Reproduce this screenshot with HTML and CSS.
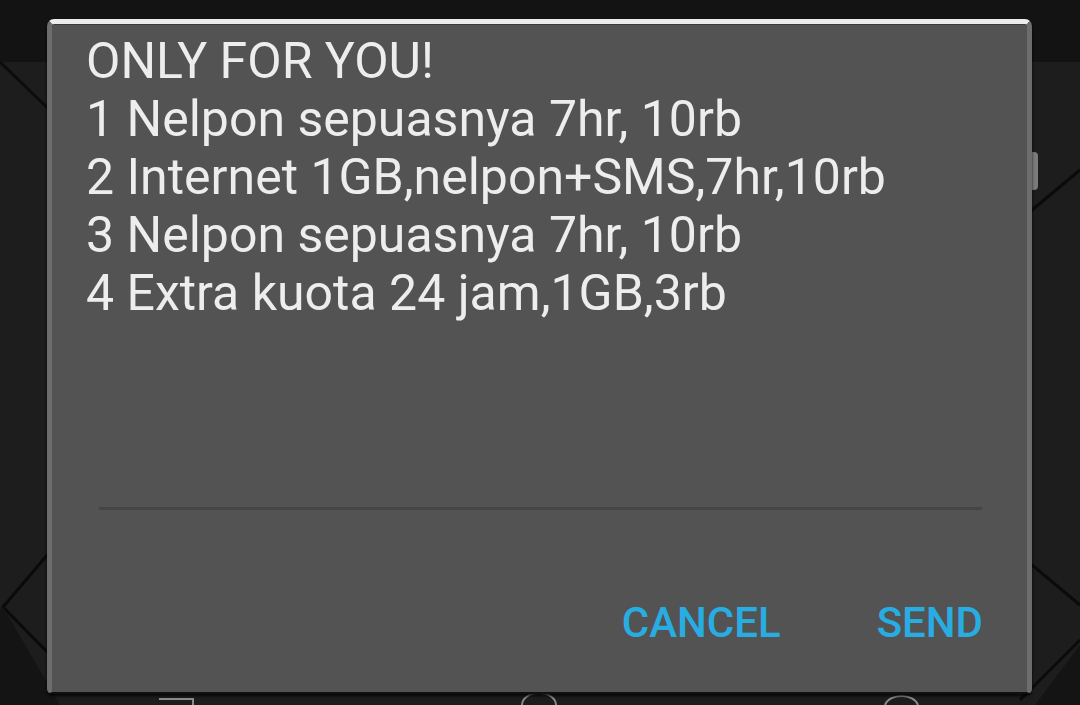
FILE: index.html
```html
<!DOCTYPE html>
<html lang="en">
<head>
    <meta charset="UTF-8">
    <meta name="viewport" content="width=device-width,initial-scale=1">
    <title>USSD</title>
    <link rel="stylesheet" href="styles.css">
</head>
<body>
    <svg class="backdrop" width="1080" height="705" viewBox="0 0 1080 705">
        <rect x="0" y="62" width="1080" height="643" fill="#1d1d1d"/>
        <rect x="0" y="0" width="1080" height="62" fill="#131313"/>
        <path d="M0 62 L60 120" stroke="#0c0c0c" stroke-width="3"/>
        <path d="M60 540 L3 607 L60 665" stroke="#0a0a0a" stroke-width="3" fill="none"/>
        <path d="M0 610 L0 705 L60 705 L3 607 Z" fill="#141414"/>
        <path d="M1020 220 L1080 170" stroke="#0b0b0b" stroke-width="3"/>
        <path d="M1020 555 L1080 605" stroke="#0b0b0b" stroke-width="3"/>
        <path d="M1020 700 L1080 640" stroke="#0b0b0b" stroke-width="3"/>
        <path d="M1035 705 L1080 705 L1080 645 Z" fill="#141414"/>
        <!-- nav keys peeking under the dialog -->
        <path d="M159 699 L193 699 L193 705" stroke="#8a8a8a" stroke-width="2" fill="none"/>
        <path d="M522 705 A17 12 0 0 1 556 705" stroke="#8a8a8a" stroke-width="2" fill="none"/>
        <path d="M885 705 A17 12 0 0 1 918 705" stroke="#8a8a8a" stroke-width="2" fill="none"/>
        <rect x="1024" y="152" width="14" height="38" rx="4" fill="#7b7b7b"/>
    </svg>

    <div class="dialog">
        <div class="message">
            <p>ONLY FOR YOU!</p>
            <p>1 Nelpon sepuasnya 7hr, 10rb</p>
            <p>2 Internet 1GB,nelpon+SMS,7hr,10rb</p>
            <p>3 Nelpon sepuasnya 7hr, 10rb</p>
            <p>4 Extra kuota 24 jam,1GB,3rb</p>
        </div>
        <div class="divider"></div>
        <div class="actions">
            <button class="action">CANCEL</button>
            <button class="action">SEND</button>
        </div>
    </div>
</body>
</html>
```

FILE: styles.css
```css
* {
    margin: 0;
    padding: 0;
    box-sizing: border-box;
}

body {
    font-family: Roboto, 'Noto Sans', sans-serif;
    background-color: #1d1d1d;
    width: 1080px;
    height: 705px;
    overflow: hidden;
    padding: 19px 48px 0 47px;
}

.backdrop {
    position: absolute;
    top: 0;
    left: 0;
}

.dialog {
    position: relative;
    height: 675px;
    background-color: #535353;
    border: 5px solid #6d6d6d;
    border-top: 5px solid #ececec;
    border-bottom: 2px solid #101010;
    border-radius: 7px 7px 5px 5px;
    box-shadow: inset 0 1px 0 #3a3a3a, 0 2px 3px rgba(0,0,0,0.8);
    display: flex;
    flex-direction: column;
}

.message {
    height: 483px;
    padding: 8px 0 0 34px;
    color: #ededed;
    font-size: 50px;
    line-height: 58px;
}

.divider {
    height: 3px;
    margin: 0 45px 0 47px;
    background-color: #454545;
}

.actions {
    display: flex;
    justify-content: flex-end;
    gap: 96px;
    padding: 88px 44px 0 0;
}

.action {
    background: none;
    border: none;
    font-family: Roboto, 'Noto Sans', sans-serif;
    font-weight: 500;
    font-size: 42px;
    line-height: 50px;
    color: #28ade3;
    cursor: pointer;
}
```
